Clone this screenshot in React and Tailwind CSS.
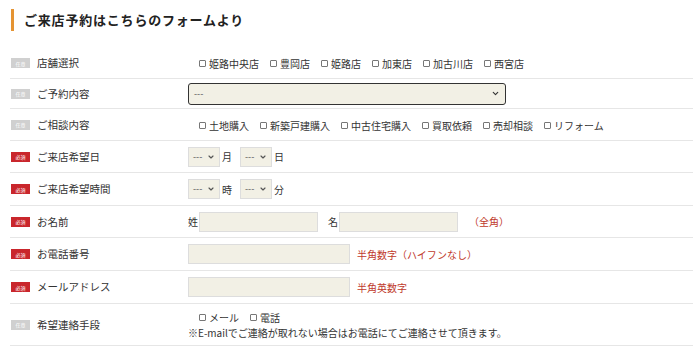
import { ChevronDown } from 'lucide-react';

const font = { fontFamily: '"Noto Sans CJK JP", "Noto Sans", sans-serif' };

function Badge({ required }) {
  return (
    <span
      className={`inline-flex h-[10px] w-[19px] shrink-0 items-center justify-center text-[5px] leading-none text-white ${required ? 'bg-[#c9262c]' : 'bg-[#d0d0d0]'}`}
    >
      {required ? '必須' : '任意'}
    </span>
  );
}

function Row({ label, required, className = 'h-[32px]', children }) {
  return (
    <div className={`flex items-center border-b border-[#e6e6e6] ${className}`}>
      <div className="flex w-[178px] shrink-0 items-center gap-[7px] pl-[1px]">
        <Badge required={required} />
        <span className="text-[10.5px] text-[#333]">{label}</span>
      </div>
      <div className="flex min-w-0 flex-1 items-center text-[10px] text-[#333]">{children}</div>
    </div>
  );
}

function Check({ label }) {
  return (
    <span className="mr-[11px] inline-flex items-center">
      <span className="mr-[3px] inline-block h-[7px] w-[7px] rounded-[1px] border border-[#777] bg-white" />
      {label}
    </span>
  );
}

function SmallSelect() {
  return (
    <span className="inline-flex h-[20px] w-[32px] items-center justify-between border border-[#ddd] bg-[#f2f0e5] px-[4px] text-[9px] text-[#555]">
      ---
      <ChevronDown className="h-[8px] w-[8px]" strokeWidth={3.5} />
    </span>
  );
}

function TextBox({ width }) {
  return <span className={`inline-block h-[20px] border border-[#ddd] bg-[#f2f0e5] ${width}`} />;
}

export default function App() {
  return (
    <div className="h-[348px] w-[700px] overflow-hidden bg-white" style={font}>
      <div className="flex items-center gap-[10px] pt-[9px] pl-[11px]">
        <span className="h-[22px] w-[3px] bg-[#e59433]" />
        <h1 className="text-[13px] font-bold tracking-[0.8px] text-[#222]">ご来店予約はこちらのフォームより</h1>
      </div>

      <div className="mx-[10px] mt-[17px] w-[683px]">
        <Row label="店舗選択" required={false} className="h-[31px]">
          <div className="pl-[11px]">
            <Check label="姫路中央店" />
            <Check label="豊岡店" />
            <Check label="姫路店" />
            <Check label="加東店" />
            <Check label="加古川店" />
            <Check label="西宮店" />
          </div>
        </Row>

        <Row label="ご予約内容" required={false} className="h-[30px]">
          <div className="flex h-[22px] w-[318px] items-center justify-between rounded-[3px] border border-[#333] bg-[#f2f0e5] px-[5px] text-[9px] text-[#555]">
            ---
            <ChevronDown className="h-[9px] w-[9px] text-[#333]" strokeWidth={3} />
          </div>
        </Row>

        <Row label="ご相談内容" required={false}>
          <div className="pl-[11px]">
            <Check label="土地購入" />
            <Check label="新築戸建購入" />
            <Check label="中古住宅購入" />
            <Check label="買取依頼" />
            <Check label="売却相談" />
            <Check label="リフォーム" />
          </div>
        </Row>

        <Row label="ご来店希望日" required>
          <SmallSelect />
          <span className="ml-[2px] mr-[8px]">月</span>
          <SmallSelect />
          <span className="ml-[2px]">日</span>
        </Row>

        <Row label="ご来店希望時間" required className="h-[33px]">
          <SmallSelect />
          <span className="ml-[2px] mr-[8px]">時</span>
          <SmallSelect />
          <span className="ml-[2px]">分</span>
        </Row>

        <Row label="お名前" required>
          <span className="mr-[1px]">姓</span>
          <TextBox width="w-[119px]" />
          <span className="ml-[10px] mr-[1px]">名</span>
          <TextBox width="w-[119px]" />
          <span className="ml-[11px] text-[#c0392b]">（全角）</span>
        </Row>

        <Row label="お電話番号" required className="h-[33px]">
          <TextBox width="w-[162px]" />
          <span className="ml-[7px] text-[#c0392b]">半角数字（ハイフンなし）</span>
        </Row>

        <Row label="メールアドレス" required className="h-[33px]">
          <TextBox width="w-[162px]" />
          <span className="ml-[7px] text-[#c0392b]">半角英数字</span>
        </Row>

        <Row label="希望連絡手段" required={false} className="h-[42px]">
          <div className="flex flex-col leading-[15px]">
            <div className="pl-[11px]">
              <Check label="メール" />
              <Check label="電話" />
            </div>
            <div>※E-mailでご連絡が取れない場合はお電話にてご連絡させて頂きます。</div>
          </div>
        </Row>
      </div>
    </div>
  );
}
